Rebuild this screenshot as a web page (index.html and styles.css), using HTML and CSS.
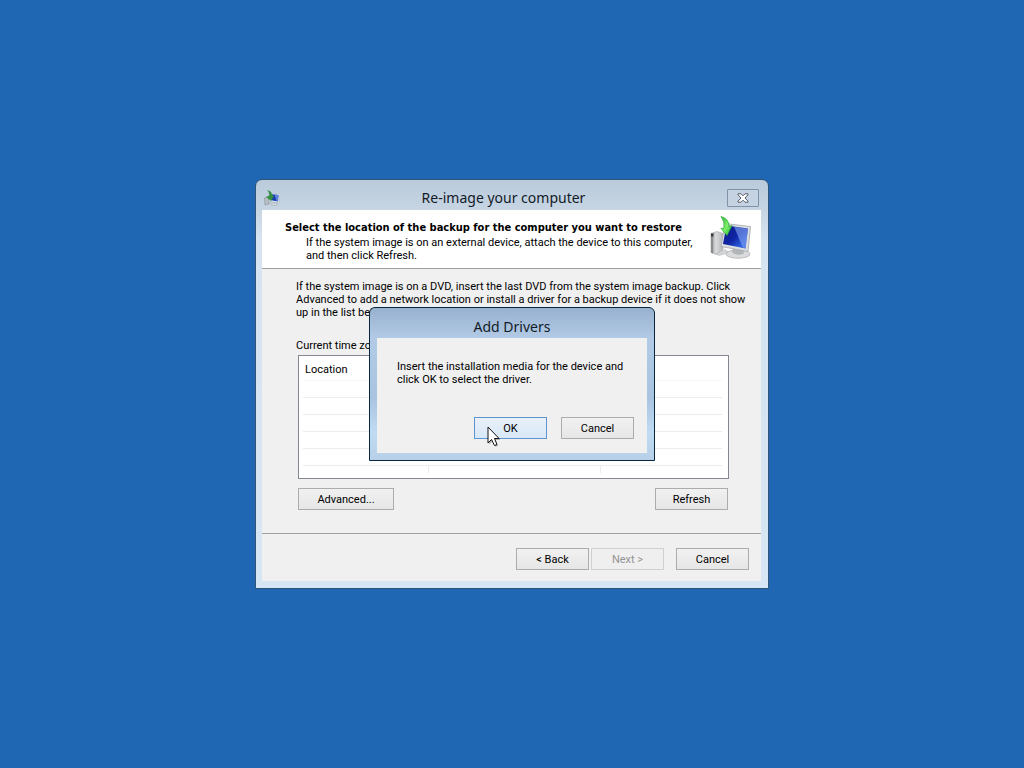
FILE: index.html
```html
<!DOCTYPE html>
<html lang="en">
<head>
<meta charset="utf-8">
<meta name="viewport" content="width=device-width, initial-scale=1">
<title>Re-image your computer</title>
<link rel="stylesheet" href="styles.css">
</head>
<body>
<svg class="defs" aria-hidden="true">
  <defs>
    <linearGradient id="screen" x1="0" y1="0" x2="1" y2="1">
      <stop offset="0" stop-color="#0a1a86"/><stop offset=".5" stop-color="#0f25a4"/><stop offset=".8" stop-color="#2f62e0"/><stop offset="1" stop-color="#1c43c8"/>
    </linearGradient>
    <linearGradient id="arrow" x1="0" y1="0" x2="1" y2="1">
      <stop offset="0" stop-color="#2faa35"/><stop offset=".5" stop-color="#7df06a"/><stop offset="1" stop-color="#25b52c"/>
    </linearGradient>
    <linearGradient id="metal" x1="0" y1="0" x2="1" y2="0">
      <stop offset="0" stop-color="#8f9294"/><stop offset=".4" stop-color="#d9dbdc"/><stop offset="1" stop-color="#b4b7b9"/>
    </linearGradient>
    <symbol id="computer" viewBox="0 0 42 44">
      <path d="M1 18 L7 16 L13 18 V34 L6 39 L1 37 Z" fill="url(#metal)" stroke="#a2a4a6" stroke-width=".6"/>
      <path d="M1 18 L3 18.500 V38 L1 37 Z" fill="#898c8f"/>
      <path d="M1 18 H3.500 V21 H1 Z" fill="#393c40"/>
      <path d="M6 38.500 L15 34 L19 37 L9 40 Z" fill="#d5d6d7" stroke="#aaa" stroke-width=".5"/>
      <ellipse cx="28" cy="38.500" rx="12" ry="4.300" fill="#d9dbdd" stroke="#a8abad" stroke-width=".7"/>
      <path d="M23 33 L33 34 L34 38 Q28 41 22 37 Z" fill="#b2b6b9"/>
      <path d="M15 8 L40.500 11 L38 36 L11 31 Z" fill="#dcdfe1" stroke="#a3a8ad" stroke-width=".8"/>
      <path d="M16.500 10 L38 13 L35.500 33 L13 28.500 Z" fill="url(#screen)"/>
      <path d="M24 11.300 L38 13 L35.500 33 L33 32.500 Z" fill="#7d9df0" opacity=".65"/>
      <path d="M11 1 Q19 3 19 11 L22 10 L17 20 L11 13 L14 12.500 Q15 6 11 1 Z" fill="url(#arrow)" stroke="#27ab2d" stroke-width=".7"/>
    </symbol>
  </defs>
</svg>

<main class="window">
  <header class="titlebar">
    <svg class="titlebar-icon" viewBox="0 0 16 16" aria-hidden="true">
      <path d="M.5 8 L5 6 V14 L1 15 Z" fill="#b7bec4" stroke="#7d868d" stroke-width=".5"/>
      <path d="M5 3 L16 4 L15 13 L5 11 Z" fill="#edf2f5" stroke="#9caab8" stroke-width=".5"/>
      <path d="M6 4 L14.500 5 L14 11.500 L6 10 Z" fill="#1739ae"/>
      <path d="M10.500 4.500 L14.500 5 L14 11.500 L12.500 11 Z" fill="#5a83dc"/>
      <ellipse cx="10" cy="14.200" rx="4" ry="1.400" fill="#cfd6dc" stroke="#8e9aa5" stroke-width=".4"/>
      <path d="M3 0 Q8 1 8 5 L10 6 L7 11 L2 7 L5 6 Q6 3 3 0 Z" fill="#358f43"/>
    </svg>
    <h1 class="title">Re-image your computer</h1>
    <button class="close" type="button" aria-label="Close">
      <svg class="close-icon" viewBox="0 0 12 10" aria-hidden="true">
        <path d="M1 .8 H4 L6 2.800 L8 .8 H11 V1.800 L8 5 L11 8.200 V9.200 H8 L6 7.200 L4 9.200 H1 V8.200 L4 5 L1 1.800 Z" fill="#fff" stroke="#535d6b" stroke-width="1"/>
      </svg>
    </button>
  </header>

  <div class="client">
    <section class="banner">
      <div class="banner-text">
        <h2 class="banner-title">Select the location of the backup for the computer you want to restore</h2>
        <p class="banner-note">If the system image is on an external device, attach the device to this computer,<br>and then click Refresh.</p>
      </div>
      <svg class="banner-icon" aria-hidden="true"><use href="#computer"/></svg>
    </section>

    <section class="content">
      <p class="intro">If the system image is on a DVD, insert the last DVD from the system image backup. Click<br>Advanced to add a network location or install a driver for a backup device if it does not show<br>up in the list below.</p>
      <p class="zone">Current time zone:</p>
      <div class="list">
        <table class="locations">
          <thead><tr><th scope="col">Location</th><td></td><td></td></tr></thead>
          <tbody>
            <tr><td></td><td></td><td></td></tr>
            <tr><td></td><td></td><td></td></tr>
            <tr><td></td><td></td><td></td></tr>
            <tr><td></td><td></td><td></td></tr>
            <tr><td></td><td></td><td></td></tr>
            <tr class="partial"><td></td><td></td><td></td></tr>
          </tbody>
        </table>
      </div>
      <div class="list-actions">
        <button class="button wide" type="button">Advanced...</button>
        <button class="button" type="button">Refresh</button>
      </div>
    </section>

    <footer class="footer">
      <div class="steps">
        <button class="button" type="button">&lt; Back</button>
        <button class="button" type="button" disabled>Next &gt;</button>
      </div>
      <button class="button" type="button">Cancel</button>
    </footer>
  </div>

  <div class="overlay">
    <div class="dialog" role="dialog" aria-labelledby="dialog-title">
      <h2 class="title dialog-title" id="dialog-title">Add Drivers</h2>
      <div class="dialog-body">
        <p class="dialog-text">Insert the installation media for the device and<br>click OK to select the driver.</p>
        <div class="dialog-actions">
          <button class="button primary" type="button">OK
            <svg class="cursor" viewBox="0 0 14 22" aria-hidden="true">
              <path d="M2 2 V18.500 L6 15 L8.500 21 L11 20 L8.500 14 H13.500 Z" fill="#000" opacity=".25"/>
              <path d="M1 1 V17 L4.500 13.500 L7.500 19.500 L10 18.500 L7.500 12.500 H12 Z" fill="#fff" stroke="#111" stroke-width="1"/>
            </svg>
          </button>
          <button class="button" type="button">Cancel</button>
        </div>
      </div>
    </div>
  </div>
</main>
</body>
</html>
```
FILE: styles.css
```css
* { box-sizing: border-box; }

body {
  margin: 0;
  min-height: 100vh;
  display: grid;
  place-items: center;
  background: #1f67b3;
  color: #000;
  font-family: Roboto, sans-serif;
  font-size: 11px;
  line-height: 13px;
}

h1, h2, p { margin: 0; }

.defs { position: absolute; width: 0; height: 0; }

.window {
  position: relative;
  width: 100%;
  max-width: 514px;
  padding: 0 7px 7px 6px;
  border: 1px solid #315579;
  border-radius: 7px 7px 0 0;
  background: linear-gradient(#b9cbdc, #c7d5e3 30px, #d6e3f1 60px, #d7e6f4);
}

.titlebar {
  display: flex;
  align-items: center;
  height: 30px;
  padding: 6px 2px 0 2px;
}

.titlebar-icon { width: 16px; height: 16px; }

.title {
  flex: 1;
  font-family: "Noto Sans", sans-serif;
  font-size: 14px;
  font-weight: 400;
  line-height: 20px;
  text-align: center;
  color: #131b28;
}

.close {
  display: grid;
  place-items: center;
  width: 32px;
  height: 18px;
  padding: 0;
  border: 1px solid #8092a8;
  border-radius: 1px;
  background: #c4d2e1;
}

.close-icon { width: 12px; height: 10px; }

.client { background: #f0f0f0; }

.banner {
  display: flex;
  justify-content: space-between;
  padding: 5px 9px 6px 23px;
  border-bottom: 1px solid #a0a0a0;
  background: #fff;
}

.banner-text { padding-top: 6px; }
.banner-title { font-family: "DejaVu Sans Condensed", "DejaVu Sans", sans-serif; font-size: 11px; line-height: 13px; font-weight: 700; }
.banner-note { padding: 2px 0 0 21px; }
.banner-icon { width: 42px; height: 45px; }

.content { padding: 11px 32px 23px 34px; }
.intro { margin-right: -20px; }
.zone { padding: 20px 0 3px; }

.list {
  height: 124px;
  padding: 4px 6px 0 4px;
  border: 1px solid #828790;
  background: #fff;
}

.locations {
  width: 100%;
  border-collapse: collapse;
  table-layout: fixed;
}

.locations th,
.locations td {
  height: 17px;
  padding: 0 2px;
  border-bottom: 1px solid #ececec;
  line-height: 13px;
  text-align: left;
  font-weight: 400;
}

.locations thead th,
.locations thead td { height: 20px; border-color: #f7f7f7; }
.locations th:first-child { width: 30%; }
.locations thead td:nth-child(2) { width: 41%; }
.locations tbody .partial td + td { border-left: 1px solid #ececec; }
.locations .partial td { height: 8px; border-bottom: 0; }

.list-actions {
  display: flex;
  justify-content: space-between;
  padding: 9px 1px 0 0;
}

.list, .list-actions { margin-left: 2px; }

.button {
  min-width: 73px;
  height: 22px;
  padding: 0 8px;
  border: 1px solid #acacac;
  background: linear-gradient(#f1f1f1, #e6e6e6);
  color: #000;
  font: inherit;
}

.button:disabled { border-color: #d0d0d0; background: #efefef; color: #939393; }
.wide { min-width: 96px; }

.footer {
  display: flex;
  justify-content: flex-end;
  gap: 12px;
  padding: 14px 12px 11px;
  border-top: 1px solid #a0a0a0;
}

.steps { display: flex; gap: 2px; }

.overlay {
  position: absolute;
  inset: 0;
  display: grid;
  place-items: center;
}

.dialog {
  min-width: 286px;
  padding: 0 7px 7px;
  border: 1px solid #06273d;
  border-radius: 6px 6px 0 0;
  background: linear-gradient(#97b1cf, #b2cae5 30px, #a8c4e1 90px, #c0dbf2 124px, #b7d0e8);
}

.dialog-title { padding: 9px 0 1px; }

.dialog-body {
  padding: 22px 13px 14px 20px;
  background: #f0f0f0;
}

.dialog-actions {
  display: flex;
  justify-content: flex-end;
  gap: 14px;
  padding-top: 31px;
}

.primary {
  position: relative;
  border-color: #5e94d0;
  background: linear-gradient(#e9f0f8, #d8e8f8);
}

.cursor {
  position: absolute;
  left: 12px;
  top: 8px;
  width: 14px;
  height: 22px;
}
```
